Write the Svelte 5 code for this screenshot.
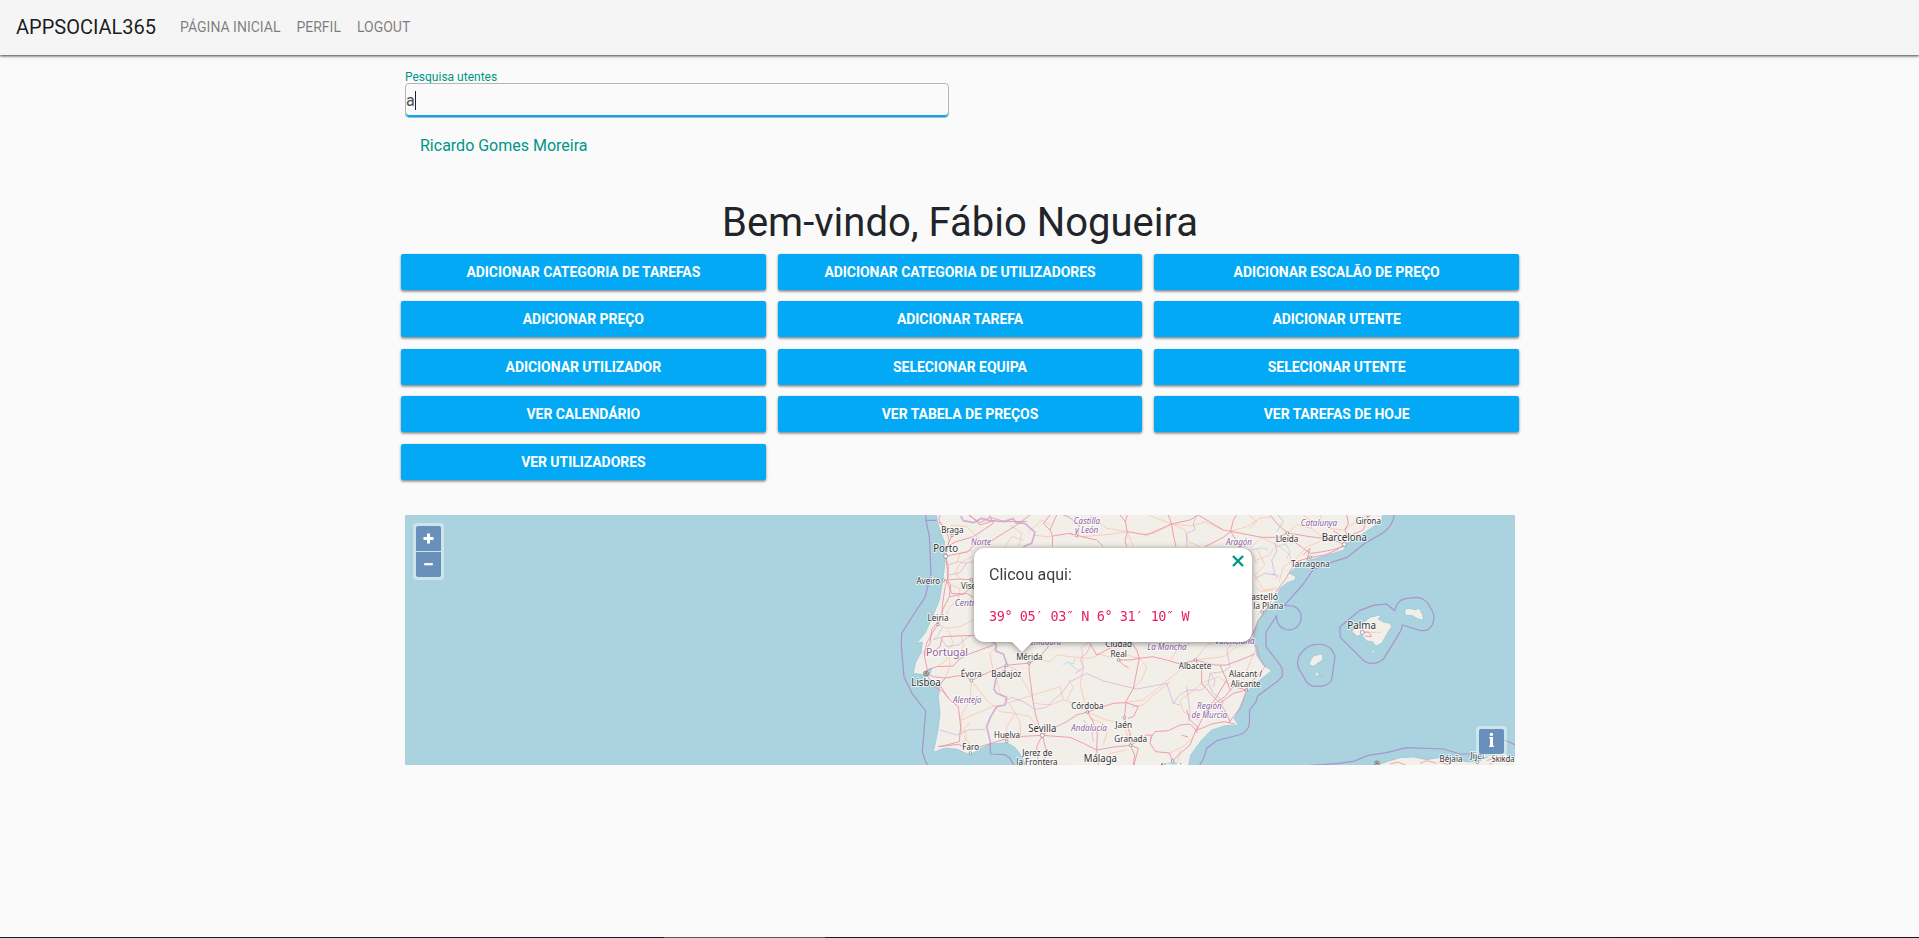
<script>
  const links = ['Página inicial', 'Perfil', 'Logout'];

  const actions = [
    'Adicionar categoria de tarefas', 'Adicionar categoria de utilizadores', 'Adicionar escalão de preço',
    'Adicionar preço', 'Adicionar tarefa', 'Adicionar utente',
    'Adicionar utilizador', 'Selecionar equipa', 'Selecionar utente',
    'Ver calendário', 'Ver tabela de preços', 'Ver tarefas de hoje',
    'Ver utilizadores'
  ];

  // Labels: text, centre x, baseline y, drawn width, kind (map units, three per pixel)
  const labels = [
    ['Braga', 187, 98, 67, 'town'], ['Porto', 167, 154, 75, 'city'], ['Norte', 273, 135, 60, 'region'],
    ['Aveiro', 115, 250, 71, 'town'], ['Viseu', 243, 265, 60, 'town'], ['Centro', 232, 317, 76, 'region'],
    ['Leiria', 144, 362, 63, 'town'], ['Portugal', 171, 468, 126, 'country'], ['Lisboa', 108, 557, 88, 'city'],
    ['Évora', 244, 529, 63, 'town'], ['Badajoz', 349, 529, 90, 'town'], ['Mérida', 418, 480, 79, 'town'],
    ['Alentejo', 232, 609, 86, 'region'], ['Faro', 242, 748, 50, 'town'], ['Huelva', 351, 714, 78, 'town'],
    ['Sevilla', 457, 694, 84, 'city'], ['Jerez de', 442, 766, 90, 'town'], ['la Frontera', 441, 794, 124, 'town'],
    ['Málaga', 631, 786, 100, 'city'], ['Granada', 722, 725, 98, 'town'], ['Jaén', 701, 684, 50, 'town'],
    ['Córdoba', 592, 627, 97, 'town'], ['Andalucía', 597, 693, 107, 'region'], ['Castilla', 591, 70, 79, 'region'],
    ['y León', 590, 99, 70, 'region'], ['Extremadura', 447, 435, 132, 'region'], ['Ciudad', 686, 441, 80, 'town'],
    ['Real', 686, 470, 49, 'town'], ['La Mancha', 831, 450, 118, 'region'], ['Albacete', 915, 507, 97, 'town'],
    ['Región', 958, 625, 74, 'region'], ['de Murcia', 958, 653, 107, 'region'], ['Alacant /', 1067, 531, 100, 'town'],
    ['Alicante', 1067, 560, 90, 'town'], ['Valenciana', 1034, 430, 120, 'region'], ['Castelló', 1115, 298, 98, 'town'],
    ['la Plana', 1135, 327, 90, 'town'], ['Aragón', 1047, 133, 78, 'region'], ['Lleida', 1191, 126, 68, 'town'],
    ['Catalunya', 1287, 78, 109, 'region'], ['Girona', 1435, 72, 76, 'town'], ['Barcelona', 1363, 121, 136, 'city'],
    ['Tarragona', 1261, 200, 116, 'town'], ['Palma', 1415, 385, 86, 'city'], ['Béjaïa', 1683, 785, 69, 'town'],
    ['Jijel', 1762, 777, 41, 'town'], ['Skikda', 1839, 786, 69, 'town'], ['Almería', 847, 809, 76, 'town']
  ];

  const dots = [
    [186, 106, 4], [167, 169, 6], [161, 241, 4], [244, 239, 4], [144, 373, 4], [244, 541, 4], [349, 496, 4],
    [417, 489, 4], [241, 759, 4], [350, 724, 4], [457, 706, 6], [592, 636, 4], [703, 653, 4], [722, 736, 4],
    [686, 480, 4], [916, 480, 4], [1069, 570, 4], [1117, 336, 4], [1192, 99, 4], [1363, 133, 6], [1261, 172, 4],
    [1417, 397, 6], [848, 783, 4], [1762, 787, 4], [1434, 46, 4]
  ];

  const majorRoads = [
    'M150 45L146 60L168 92L178 120L167 169L175 200L172 240L182 255L178 290L160 325L144 373L128 397L110 430L103 465L112 510L108 520',
    'M167 169L175 230L165 262L158 310L155 350L125 390L120 430L100 460',
    'M145 65L186 106L174 132L167 169L235 155L250 135L300 125L345 97L380 75L420 45',
    'M298 45L310 70L280 90L250 110L195 126L180 135', 'M240 45L270 75L310 62', 'M235 45L270 68L300 52L345 65L410 64',
    'M161 241L205 237L244 239L250 250', 'M172 245L185 280L220 282L250 258', 'M178 290L230 280L250 292',
    'M103 465L130 455L150 440L157 410L250 406', 'M112 510L140 500L190 498L205 480L230 465L270 450L310 435',
    'M108 520L130 530L165 534L220 525L244 541L300 515L349 496L417 489L450 470L475 440L467 425',
    'M108 520L132 560L160 575L180 600L205 620L212 680L208 725L170 735L145 740',
    'M165 534L150 555L175 595', 'M145 740L205 733L241 749L300 731L350 716L400 709L457 706',
    'M417 489L418 520L430 610L438 650L457 706L480 690L530 665L560 645L592 636L640 620L670 610L706 608L730 565L743 500L748 475L740 450L725 427',
    'M457 706L540 712L580 730L620 750L625 795', 'M457 706L440 740L446 795M457 706L468 750L462 795',
    'M592 636L607 660L622 700L620 750M620 750L670 741L722 736L745 745L732 795M722 736L720 700L703 653L708 608L745 620L730 650L714 655',
    'M722 736L770 705L785 706L780 730L797 755L838 759L848 783M780 718L795 695L835 692L870 675L900 672L918 690M722 738L734 765L730 795',
    'M918 690L935 685L965 672L1003 665L1035 672M918 690L900 735L865 765L848 783M920 700L922 680L900 660L890 630',
    'M875 706L895 711', 'M686 480L700 495L716 503M686 480L720 480L748 475L788 470L830 480L870 492L916 480L975 495L1010 495L1050 480L1095 462',
    'M916 480L935 510L935 550L965 585L990 610L1010 640L1020 665M990 610L1030 580L1069 570L1055 620L1030 650L1015 670',
    'M1069 570L1030 560L1005 590L960 620L935 660L920 690', 'M990 495L1010 540L1020 570M1010 540L980 590L950 635',
    'M540 100L562 112L568 75L535 50L520 45M500 45L480 90L488 110L487 140M480 90L460 70L480 45',
    'M488 108L540 100L575 110L620 120L640 140', 'M690 45L706 65L712 95L705 125L711 140M706 65L712 45',
    'M712 95L770 105L845 72L900 60L925 45M845 72L850 105L858 140M845 72L835 45',
    'M925 45L1000 90L1022 94L1030 60L1040 45M1022 94L1115 112L1165 112L1192 99L1260 110L1325 118L1363 133',
    'M1022 94L1000 112L945 140M1022 94L1050 140', 'M1192 99L1205 120L1240 145L1261 160L1280 158L1325 150L1360 140L1372 110L1420 90L1434 46',
    'M1140 45L1160 70L1192 99M1372 110L1365 90L1375 70L1370 45M1363 125L1350 105L1330 92',
    'M1261 172L1220 185L1205 205L1185 240L1165 265L1145 300L1125 340L1105 360L1095 390L1080 415L1100 440L1110 475L1125 500L1090 540L1069 570',
    'M1240 165L1260 145L1250 180L1261 172M1261 172L1305 165L1340 150L1363 133',
    'M1417 397L1435 396L1445 410L1425 408M1390 400L1400 407', 'M600 430L620 465L650 450L670 440'
  ];

  const minorRoads = [
    'M168 92L185 75L230 80L265 115L280 135', 'M360 75L395 100L390 125L385 140', 'M340 150L365 110L400 120',
    'M415 97L455 60L480 75', 'M430 105L470 110L488 108', 'M245 170L210 190L195 220L215 240', 'M200 190L210 160L245 150',
    'M182 255L210 265L205 300L180 320L165 355', 'M144 373L170 385L210 380L250 360', 'M175 390L190 430L175 450L180 500L165 534',
    'M165 455L170 480L140 500', 'M215 408L220 440L205 480', 'M244 541L240 600L212 650L215 700L241 735M215 660L260 640L320 615',
    'M244 541L290 600L330 635L375 640M310 515L300 460L325 435', 'M215 740L230 710L222 685L240 670',
    'M349 496L380 510L410 560L430 600M430 610L480 615L520 600L575 618',
    'M417 489L440 478L480 485L500 465L540 470L600 475L630 462L670 475',
    'M520 600L510 560L430 585L350 610M320 540L330 580L365 620L390 665L392 706',
    'M592 636L580 590L570 550L580 505L575 440L600 425', 'M457 706L420 650L375 640L350 680L350 724',
    'M592 636L650 660L700 670L722 736M640 735L650 700L640 670L600 655', 'M748 475L770 500L755 540L730 565M748 475L690 460L676 435',
    'M703 608L760 600L810 560L870 510L916 480', 'M725 620L760 615L785 590L840 545',
    'M843 480L865 440L900 430M916 480L950 435L975 425M916 480L1000 470L1040 440',
    'M935 550L900 580L870 600L880 635L925 660M935 550L985 530L1020 555', 'M838 759L880 740L910 710M862 790L870 750',
    'M712 95L650 85L600 45M712 95L660 103L575 110M712 95L730 140', 'M762 103L792 100L845 72L775 45M845 72L905 78L945 65L1000 90',
    'M855 76L885 90L895 125L930 140M1022 94L1070 80L1110 55L1140 50', 'M1080 85L1100 65L1075 45M1085 140L1115 112L1170 140L1200 165L1208 205',
    'M1192 99L1220 75L1265 85L1290 105L1325 118M1265 85L1260 60L1240 45', 'M1290 45L1295 65L1320 85L1360 90L1400 65',
    'M1100 145L1125 195L1095 225L1120 270L1160 265M1100 180L1140 165L1150 145', 'M1168 245L1180 200L1215 180L1250 140L1290 125',
    'M1100 350L1120 320L1090 295', 'M1425 397L1473 397', 'M1100 440L1075 500L1060 540',
    'M1040 140L1080 150L1100 190M1150 270L1115 275L1095 260', 'M530 600L550 560L535 540', 'M640 790L660 760L710 750'
  ];

  const regionBorders = [
    'M175 195L205 185L225 190L250 185', 'M178 225L210 218L230 190', 'M130 420L150 412L170 440L205 435L235 410L280 400L310 405',
    'M150 690L200 705L235 690L285 688', 'M350 600L365 592L400 605L435 628L470 622L490 600L515 580L540 545L590 520L640 543L690 555L740 567L830 550L850 610L870 615',
    'M603 430L590 460L570 475L580 505L555 520', 'M850 610L868 585L895 570L935 570L955 550L960 520L1000 515L1020 500L1010 450L1030 425',
    'M920 45L910 70L915 90L890 100L890 140', 'M1180 110L1155 125L1160 155L1145 180L1155 225L1125 220L1095 235',
    'M1165 45L1180 65L1160 95M1145 220L1165 228L1155 235', 'M955 550L970 580L1000 605L990 630L1010 650M890 560L900 635L895 665',
    'M610 725L605 690L580 660M960 520L975 540L970 560'
  ];
</script>

<header class="navbar">
  <a class="brand" href="#inicio">APPSOCIAL365</a>
  <nav>
    {#each links as link}
      <a href="#inicio">{link}</a>
    {/each}
  </nav>
</header>

<main>
  <section class="search">
    <label for="pesquisa">Pesquisa utentes</label>
    <div class="field" id="pesquisa"><span>a</span><i class="caret"></i></div>
    <a class="result" href="#utente">Ricardo Gomes Moreira</a>
  </section>

  <h1>Bem-vindo, Fábio Nogueira</h1>

  <section class="actions">
    {#each actions as action}
      <button>{action}</button>
    {/each}
  </section>

  <section class="map">
    <svg class="tiles" viewBox="1455 0 3330 750" width="1110" height="250">
      <!-- Map units start 485px right of and 15px above the viewport corner -->
      <g transform="translate(2910 -45)">
        <g class="land">
          <path d="M138 40L142 65L150 90L163 125L166 170L163 205L157 250L148 300L128 350L105 400L80 430L97 426L94 455L76 490L70 520L98 524L112 510L125 505L118 526L96 535L100 542L125 540L132 557L150 558L145 590L150 640L144 690L130 757L166 744L202 748L240 765L270 747L300 732L350 728L375 742L392 765L407 795L895 800L902 765L935 720L965 690L1005 677L1045 675L1032 655L1050 620L1065 585L1080 565L1110 540L1145 512L1120 495L1100 465L1093 430L1090 395L1105 360L1125 330L1155 305L1170 265L1190 250L1215 239L1218 230L1198 220L1230 190L1260 180L1330 160L1362 150L1370 130L1420 100L1450 80L1475 60L1480 40Z" />
          <path d="M1450 800L1490 785L1530 773L1570 771L1610 779L1645 773L1690 776L1730 785L1762 785L1800 768L1830 750L1850 765L1880 770L1880 800Z" />
          <path d="M1385 392L1410 376L1440 352L1458 348L1465 344L1472 351L1464 357L1480 366L1500 370L1505 380L1492 400L1475 430L1458 438L1447 425L1430 423L1415 404L1397 410Z" />
          <path d="M1545 327L1560 325L1575 330L1588 325L1598 345L1600 361L1580 355L1568 347L1545 345Z" />
          <path d="M1258 488L1270 468L1292 462L1298 467L1297 481L1278 493L1272 499L1260 496Z" />
          <path d="M1274 526L1280 514L1288 524L1297 527L1285 525L1278 529ZM1448 448L1454 452L1451 460L1445 458Z" />
        </g>
        <path class="lake" d="M825 800L832 789L858 787L866 800ZM70 522L98 527L112 512L126 503L120 524L103 530L96 537Z" />
        <path class="river" d="M1060 140L1080 135L1088 150L1115 143L1135 150M1155 140L1188 132L1200 155L1190 175M130 420L145 405L157 380M520 494L535 486L550 492L555 476M535 486L555 505L572 513M1195 243L1190 253L1200 248" />
        <g class="minor">{#each minorRoads as d}<path {d} />{/each}</g>
        <g class="major">{#each majorRoads as d}<path {d} />{/each}</g>
        <g class="regions">{#each regionBorders as d}<path {d} />{/each}</g>
        <path class="frontier" d="M212 48L220 62L250 68L275 55L300 62L340 65L370 56L378 68L405 70L435 97L425 130L400 140M300 420L318 433L317 453L340 462L350 490L343 510L318 536L312 568L320 580L350 592L345 615L320 620L302 650L290 680L302 730" />
        <g class="waters">
          <path d="M107 40L108 62L118 110L123 220L106 290L70 345L35 400L34 440L42 530L66 580L107 633L97 755L105 780L116 800M107 61L140 61" />
          <path d="M300 730L302 762L345 764L360 775L374 800" />
          <path d="M1512 40C1514 60 1500 84 1480 98L1425 130L1370 173L1330 185L1270 208L1240 252L1183 316L1210 318A37 37 0 1 1 1160 347L1128 396L1128 440L1174 500Q1180 515 1176 530L1165 542L1103 588L1098 605L1079 630L1078 672Q1075 690 1055 702L1035 708L980 722L950 745L943 770L928 798" />
          <path d="M1350 390Q1348 378 1360 372L1408 332L1450 316L1490 312L1514 332L1520 315Q1530 297 1550 295L1580 292Q1600 294 1612 308L1627 333Q1637 350 1627 374Q1615 396 1590 391L1537 375L1533 391L1480 478Q1450 500 1422 483L1351 412Z" />
          <path d="M1222 488L1228 466Q1250 434 1280 433Q1310 431 1326 450L1335 468L1326 535Q1320 560 1280 559Q1260 560 1249 545L1225 503Z" />
          <path d="M1260 796L1340 791L1390 784L1435 766L1490 758L1550 743L1660 747L1710 762L1765 762L1790 745Q1810 715 1850 722L1880 737" />
        </g>
        <path class="algeria" d="M1500 792L1525 786L1550 797M1590 790L1610 782L1640 790M1645 786L1680 795M1790 782L1820 772L1850 780M1800 795L1825 760L1840 785" />
        {#each dots as [x, y, r]}
          <circle class="dot" cx={x} cy={y} {r} />
        {/each}
        <circle class="dot capital" cx="108" cy="520" r="7" /><circle cx="108" cy="520" r="3" fill="#666" />
        <circle class="dot capital" cx="1461" cy="790" r="7" /><circle cx="1461" cy="790" r="3" fill="#666" />
        {#each labels as [text, x, y, width, kind]}
          <text class={kind} {x} y={y + 1} textLength={width} lengthAdjust="spacingAndGlyphs">{text}</text>
        {/each}
      </g>
    </svg>

    <div class="control zoom">
      <button aria-label="Aproximar"><svg viewBox="0 0 25 25"><path d="M12.5 7.5v10M7.5 12.5h10" /></svg></button>
      <button aria-label="Afastar"><svg viewBox="0 0 25 25"><path d="M8.2 12.2h8.6" stroke-width="2.2" /></svg></button>
    </div>

    <div class="control info">
      <button aria-label="Atribuição"><svg viewBox="0 0 25 25"><path d="M12.5 8v10" /><path d="M10.4 8.8h2.6M10.2 17.2h4.6" stroke-width="1.6" /><circle cx="12.4" cy="5.4" r="1.7" fill="#fff" stroke="none" /></svg></button>
    </div>

    <div class="popup">
      <svg class="close" viewBox="0 0 12 12"><path d="M1 1l10 10M11 1L1 11" /></svg>
      <p>Clicou aqui:</p>
      <code>39° 05′ 03″ N 6° 31′ 10″ W</code>
    </div>
  </section>
</main>

<footer><i></i></footer>

<style>
  :global(body) { margin: 0; background: #fafafa; }
  :global(#app) {
    height: 938px; display: flex; flex-direction: column; overflow: hidden;
    font-family: Roboto, "Liberation Sans", sans-serif; color: #212529;
  }
  a { text-decoration: none; }
  .navbar {
    height: 55px; flex: none; display: flex; align-items: center; padding: 0 0 2px 16px; box-sizing: border-box;
    background: #f5f5f5; box-shadow: 0 1px 3px rgba(0, 0, 0, .5), 0 1px 2px rgba(0, 0, 0, .35);
  }
  .brand { font-size: 20px; line-height: 30px; color: rgba(0, 0, 0, .9); margin-right: 24px; }
  nav { display: flex; gap: 16px; }
  nav a { font-size: 14px; line-height: 20px; text-transform: uppercase; color: rgba(0, 0, 0, .5); }

  main { width: 1110px; margin: 0 auto; flex: 1; position: relative; left: .5px; }
  .search { display: flex; flex-direction: column; width: 544px; padding-top: 16px; }
  label { font-size: 12px; line-height: 13px; height: 12px; color: #009688; }
  .field {
    box-sizing: border-box; height: 35px; border: 1px solid #b5b5b5; border-radius: 4px; display: flex; align-items: center;
    font-size: 16px; color: #495057; box-shadow: inset 0 -2px #03a9f4;
  }
  .caret { width: 1px; height: 19px; background: #222; margin-left: 0; }
  .result { margin: 18px 0 0 15px; font-size: 16px; line-height: 20px; color: #009688; }

  h1 { margin: 42.8px 0 0; text-align: center; font-size: 40px; font-weight: 400; line-height: 48px; height: 48px; }

  .actions { display: grid; grid-template-columns: repeat(3, 1fr); gap: 11.5px 12px; margin: 7px -4px 0; }
  .actions button {
    height: 36px; border: 0; border-radius: 2px; padding: 0; background: #03a9f4; color: #fff;
    font: 700 14px/36px Roboto, sans-serif; letter-spacing: -.06px; text-transform: uppercase;
    box-shadow: 0 2px 2px rgba(0, 0, 0, .2), 0 1px 3px rgba(0, 0, 0, .35);
  }

  .map { position: relative; width: 1110px; height: 250px; margin-top: 35.2px; background: #aad3df; }
  .tiles { display: block; overflow: hidden; }
  .tiles path { fill: none; stroke-linejoin: round; }
  .tiles .land path { fill: #f2efe9; stroke: #8fc3dc; stroke-width: 2; }
  .tiles .lake { fill: #aad3df; }
  .tiles .river { stroke: #aad3df; stroke-width: 3; opacity: .7; }
  .tiles .minor path { stroke: #fbc5b3; stroke-width: 2.5; }
  .tiles .major path { stroke: #ec8da4; stroke-width: 2.8; opacity: .9; }
  .tiles .regions path { stroke: #cfaada; stroke-width: 3; opacity: .65; }
  .tiles .frontier { stroke: #c8a0d0; stroke-width: 5; opacity: .8; }
  .tiles .waters path { stroke: #a994cb; stroke-width: 3.6; }
  .tiles .algeria { stroke: #eda5af; stroke-width: 3; }
  .dot { fill: #fff; stroke: #777; stroke-width: 2; }
  .capital { fill: #ccc; stroke: #555; }
  text {
    font-family: "Noto Sans", sans-serif; font-size: 26px; text-anchor: middle; fill: #333;
    stroke: rgba(255, 255, 255, .7); stroke-width: 6px; stroke-linejoin: round; paint-order: stroke;
  }
  .city { font-size: 31px; }
  .region { font-style: italic; fill: #8d62a4; }
  .country { font-size: 30px; fill: #8d62a4; }

  .control { position: absolute; padding: 3px; border-radius: 4px; background: rgba(255, 255, 255, .4); display: grid; gap: 1px; }
  .zoom { left: 8px; top: 8px; }
  .info { right: 8px; bottom: 8px; }
  .control button { width: 25px; height: 25px; padding: 0; border: 0; background: #6890bb; border-radius: 2px; }
  .control svg { display: block; width: 25px; height: 25px; fill: none; stroke: #fff; stroke-width: 3; }
  .zoom button:first-child { border-radius: 2px 2px 0 0; }
  .zoom button:last-child { border-radius: 0 0 2px 2px; }

  .popup {
    position: absolute; left: 569px; top: 33px; width: 278px; height: 94px; box-sizing: border-box; padding: 15px;
    background: #fff; border-radius: 10px; filter: drop-shadow(0 1px 3px rgba(0, 0, 0, .45));
  }
  .popup::after {
    content: ''; position: absolute; left: 38px; top: 94px; border: 10px solid transparent; border-top-color: #fff; border-bottom: 0;
  }
  .popup p { margin: 0 0 20px; font-size: 16px; line-height: 24px; color: #3b3f44; }
  .popup code { display: block; font: 13.5px/18px "DejaVu Sans Mono", monospace; letter-spacing: -.43px; color: #e91e63; white-space: pre; }
  .close { position: absolute; right: 8px; top: 7px; width: 12px; height: 12px; stroke: #009688; stroke-width: 2.4; fill: none; }

  footer { flex: none; height: 1px; background: linear-gradient(90deg, #12242e, #161d22 664px, #1b1b1b 1500px, #10161b); }
  footer i { display: block; width: 161px; height: 1px; margin-left: 664px; background: #555a5b; }
</style>
